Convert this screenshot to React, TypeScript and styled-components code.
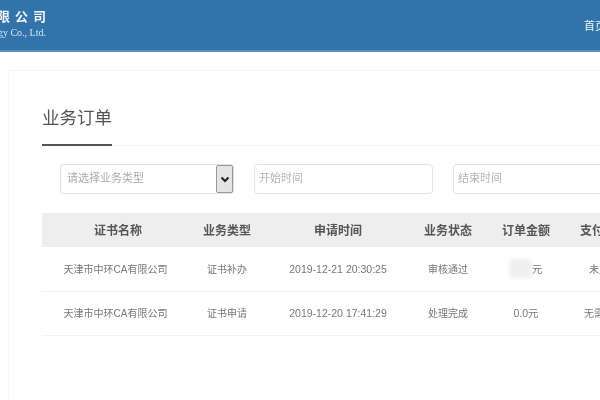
import styled, { createGlobalStyle } from 'styled-components';

const columns = '152px 66px 156px 64px 92px 64px 100px';

const orders = [
  { company: '天津市中环CA有限公司', type: '证书补办', time: '2019-12-21 20:30:25', status: '审核通过', amount: '', pay: '未支付' },
  { company: '天津市中环CA有限公司', type: '证书申请', time: '2019-12-20 17:41:29', status: '处理完成', amount: '0.0', pay: '无需支付' },
];

export default function App() {
  return (
    <Page>
      <GlobalStyle />
      <Header>
        <Logo>
          <LogoName>有限公司</LogoName>
          <LogoSub>Technology Co., Ltd.</LogoSub>
        </Logo>
        <NavLink>首页</NavLink>
      </Header>

      <Card>
        <TitleBar>
          <Title>业务订单</Title>
        </TitleBar>

        <Filters>
          <SelectBox>
            <SelectText>请选择业务类型</SelectText>
            <SelectArrow>
              <svg width="10" height="7" viewBox="0 0 10 7" fill="none">
                <path d="M1.5 1.5 5 5l3.5-3.5" stroke="#222" strokeWidth="2" />
              </svg>
            </SelectArrow>
          </SelectBox>
          <DateInput placeholder="开始时间" />
          <DateInput placeholder="结束时间" />
        </Filters>

        <Table>
          <HeadRow>
            <HeadCell>证书名称</HeadCell>
            <HeadCell>业务类型</HeadCell>
            <HeadCell>申请时间</HeadCell>
            <HeadCell>业务状态</HeadCell>
            <HeadCell>订单金额</HeadCell>
            <HeadCell>支付状态</HeadCell>
          </HeadRow>
          {orders.map((order) => (
            <Row key={order.time}>
              <CompanyCell>{order.company}</CompanyCell>
              <Cell>{order.type}</Cell>
              <Cell $numeric>{order.time}</Cell>
              <Cell>{order.status}</Cell>
              <Cell $numeric>
                {order.amount || <Masked />}元
              </Cell>
              <Cell>{order.pay}</Cell>
            </Row>
          ))}
        </Table>
      </Card>
    </Page>
  );
}

const GlobalStyle = createGlobalStyle`
  html, body {
    margin: 0;
    height: 100%;
    overflow: hidden;
    background: #fff;
  }
`;

const Page = styled.div`
  width: 600px;
  height: 400px;
  overflow: hidden;
  background: #fff;
  font-family: 'Liberation Sans', 'Noto Sans CJK SC', sans-serif;
  filter: blur(0.7px);
`;

const Header = styled.header`
  display: flex;
  justify-content: space-between;
  align-items: flex-start;
  box-sizing: border-box;
  width: 600px;
  height: 52px;
  background: #3173ab;
  border-bottom: 2px solid #5c8fbb;
`;

const Logo = styled.div`
  display: flex;
  flex-direction: column;
  align-items: flex-end;
  width: 46px;
  margin-top: 8px;
  overflow: hidden;
  white-space: nowrap;
  color: #f2f6fa;
  font-family: 'Liberation Serif', 'Noto Sans CJK SC', serif;
`;

const LogoName = styled.div`
  margin-right: -5px;
  font-size: 13px;
  line-height: 17px;
  font-weight: 700;
  letter-spacing: 5px;
`;

const LogoSub = styled.div`
  margin-top: 2px;
  font-size: 10px;
  line-height: 12px;
  color: #dbe6f0;
`;

const NavLink = styled.a`
  flex: none;
  width: 16px;
  margin-top: 19px;
  overflow: hidden;
  white-space: nowrap;
  font-size: 11px;
  line-height: 14px;
  color: #eef3f8;
`;

const Card = styled.main`
  box-sizing: border-box;
  width: 1100px;
  height: 500px;
  margin: 18px 0 0 8px;
  padding: 0 0 0 33px;
  border: 1px solid #f6f6f6;
`;

const TitleBar = styled.div`
  display: flex;
  height: 74px;
  border-bottom: 1px solid #f3f3f3;
`;

const Title = styled.h2`
  box-sizing: border-box;
  height: 75px;
  margin: 0;
  padding-top: 34px;
  border-bottom: 2px solid #555;
  font-size: 17.5px;
  line-height: 26px;
  font-weight: 400;
  color: #555;
`;

const Filters = styled.div`
  display: flex;
  gap: 20px;
  margin: 18px 0 0 18px;
`;

const SelectBox = styled.div`
  display: flex;
  box-sizing: border-box;
  flex: none;
  width: 174px;
  height: 30px;
  border: 1px solid #e2e2e2;
  border-radius: 3px;
`;

const SelectText = styled.span`
  flex: 1;
  padding-left: 6px;
  font-size: 11px;
  line-height: 27px;
  color: #aaa;
`;

const SelectArrow = styled.span`
  display: flex;
  align-items: center;
  justify-content: center;
  width: 15px;
  background: #e4e4e4;
  border: 1px solid #999;
  border-radius: 2px;
`;

const DateInput = styled.input`
  box-sizing: border-box;
  flex: none;
  width: 179px;
  height: 30px;
  padding: 0 0 2px 4px;
  border: 1px solid #e4e4e4;
  border-radius: 4px;
  outline: none;
  font-family: inherit;
  font-size: 11px;

  &::placeholder {
    color: #b4b4b4;
    opacity: 1;
  }
`;

const Table = styled.div`
  width: 694px;
  margin-top: 19px;
`;

const HeadRow = styled.div`
  display: grid;
  grid-template-columns: ${columns};
  align-items: center;
  box-sizing: border-box;
  height: 34px;
  margin-bottom: 1px;
  padding-bottom: 1px;
  background: #eee;
`;

const HeadCell = styled.div`
  text-align: center;
  font-size: 12px;
  font-weight: 700;
  color: #555;
`;

const Row = styled.div`
  display: grid;
  grid-template-columns: ${columns};
  align-items: center;
  box-sizing: border-box;
  height: 44px;
  padding-bottom: 2px;
  border-bottom: 1px solid #f2f2f2;
`;

const Cell = styled.div<{ $numeric?: boolean }>`
  display: flex;
  justify-content: center;
  align-items: center;
  font-size: ${({ $numeric }) => ($numeric ? '10.5px' : '10px')};
  color: #777;
  white-space: nowrap;
`;

const CompanyCell = styled(Cell)`
  padding-right: 5px;
`;

const Masked = styled.span`
  width: 21px;
  height: 19px;
  margin-right: 1px;
  background: #eee;
  filter: blur(2px);
`;
